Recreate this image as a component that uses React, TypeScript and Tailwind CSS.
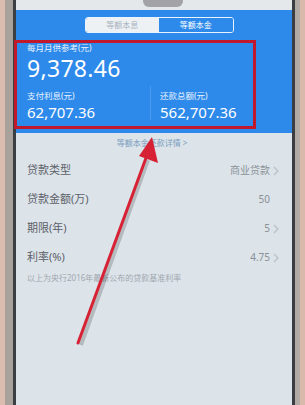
const rows = [
    { label: "贷款类型", value: "商业贷款", arrow: true },
    { label: "贷款金额(万)", value: "50", arrow: false },
    { label: "期限(年)", value: "5", arrow: true },
    { label: "利率(%)", value: "4.75", arrow: true },
];

const Chevron = () => (
    <svg width="6" height="10" viewBox="0 0 6 10" className="ml-[3px]">
        <path d="M1 1l4 4-4 4" fill="none" stroke="#b9c0c6" strokeWidth="1.2" />
    </svg>
);

const App = () => {
    return (
        <div
            className="relative w-[305px] h-[405px] overflow-hidden flex bg-[#d8b9aa]"
            style={{ fontFamily: '"Noto Sans", "Noto Sans CJK SC", sans-serif' }}
        >
            <div className="w-[5px] bg-[#dcbcae]" />
            <div className="w-[8px] bg-[#a9a19c]" />
            <div className="w-[3px] bg-[#3a3d42]" />

            {/* screen */}
            <div className="flex-1 flex flex-col bg-[#dce4ea]">
                <div className="h-[10px] bg-[#e4e8eb] flex justify-center">
                    <div className="ml-[18px] w-[40px] h-[7px] rounded-b-[6px] bg-[#a3a3a5]" />
                </div>

                <div className="h-[123px] bg-[#2d89ea] flex flex-col">
                    <div className="flex justify-center pt-[7px] pl-[10px]">
                        <div className="flex w-[149px] h-[16px] border border-white/90 rounded-[3px] overflow-hidden text-[8px] leading-none">
                            <div className="flex-1 bg-[#eef1f4] text-[#a7b2bd] flex items-center justify-center">
                                等额本息
                            </div>
                            <div className="flex-1 bg-[#2d89ea] text-white flex items-center justify-center">
                                等额本金
                            </div>
                        </div>
                    </div>

                    <div className="pl-[11px] pt-[11px] text-white">
                        <div className="text-[8.5px] leading-none text-white/90">每月月供参考(元)</div>
                        <div className="text-[23px] leading-none mt-[4px] tracking-[0.3px]">9,378.46</div>
                    </div>

                    <div className="flex mt-[12px] text-white">
                        <div className="w-[134px] pl-[11px]">
                            <div className="text-[8.5px] leading-none text-white/90">支付利息(元)</div>
                            <div className="text-[15px] leading-none mt-[5px]">62,707.36</div>
                        </div>
                        <div className="w-px h-[34px] -mt-[6px] bg-white/15" />
                        <div className="pl-[9px]">
                            <div className="text-[8.5px] leading-none text-white/90">还款总额(元)</div>
                            <div className="text-[15px] leading-none mt-[5px]">562,707.36</div>
                        </div>
                    </div>
                </div>

                <div className="text-center text-[8px] text-[#7b9cbd] mt-[6px] leading-none pr-[4px]">
                    等额本金还款详情 &gt;
                </div>

                <div className="mt-[9px] flex flex-col">
                    {rows.map((r) => (
                        <div key={r.label} className="h-[29px] flex items-center justify-between pl-[11px] pr-[13px]">
                            <span className="text-[11px] text-[#5d6168]">{r.label}</span>
                            <span className="flex items-center text-[10px] text-[#8a9096]">
                                {r.value}
                                {r.arrow ? <Chevron /> : <span className="w-[9px]" />}
                            </span>
                        </div>
                    ))}
                </div>

                <div className="pl-[11px] mt-[2px] text-[8px] text-[#a0a7ae] leading-none">
                    以上为央行2016年最新公布的贷款基准利率
                </div>
            </div>

            <div className="w-[3px] bg-[#3a3d42]" />
            <div className="w-[5px] bg-[#b2aaa5]" />
            <div className="w-[5px] bg-[#d8b9aa]" />

            {/* annotation box */}
            <div className="absolute left-[14px] top-[40px] w-[242px] h-[89px] border-[3px] border-[#c1182c]" />

            {/* annotation arrow */}
            <svg className="absolute left-0 top-0" width="305" height="405" viewBox="0 0 305 405">
                <line x1="79" y1="343" x2="146" y2="158" stroke="rgba(0,0,0,0.18)" strokeWidth="4" transform="translate(2 2)" />
                <line x1="78" y1="343" x2="146" y2="158" stroke="#d62234" strokeWidth="3" strokeLinecap="round" />
                <polygon points="152,137 158,163 139,156" fill="#d62234" />
            </svg>
        </div>
    );
};

export default App;
